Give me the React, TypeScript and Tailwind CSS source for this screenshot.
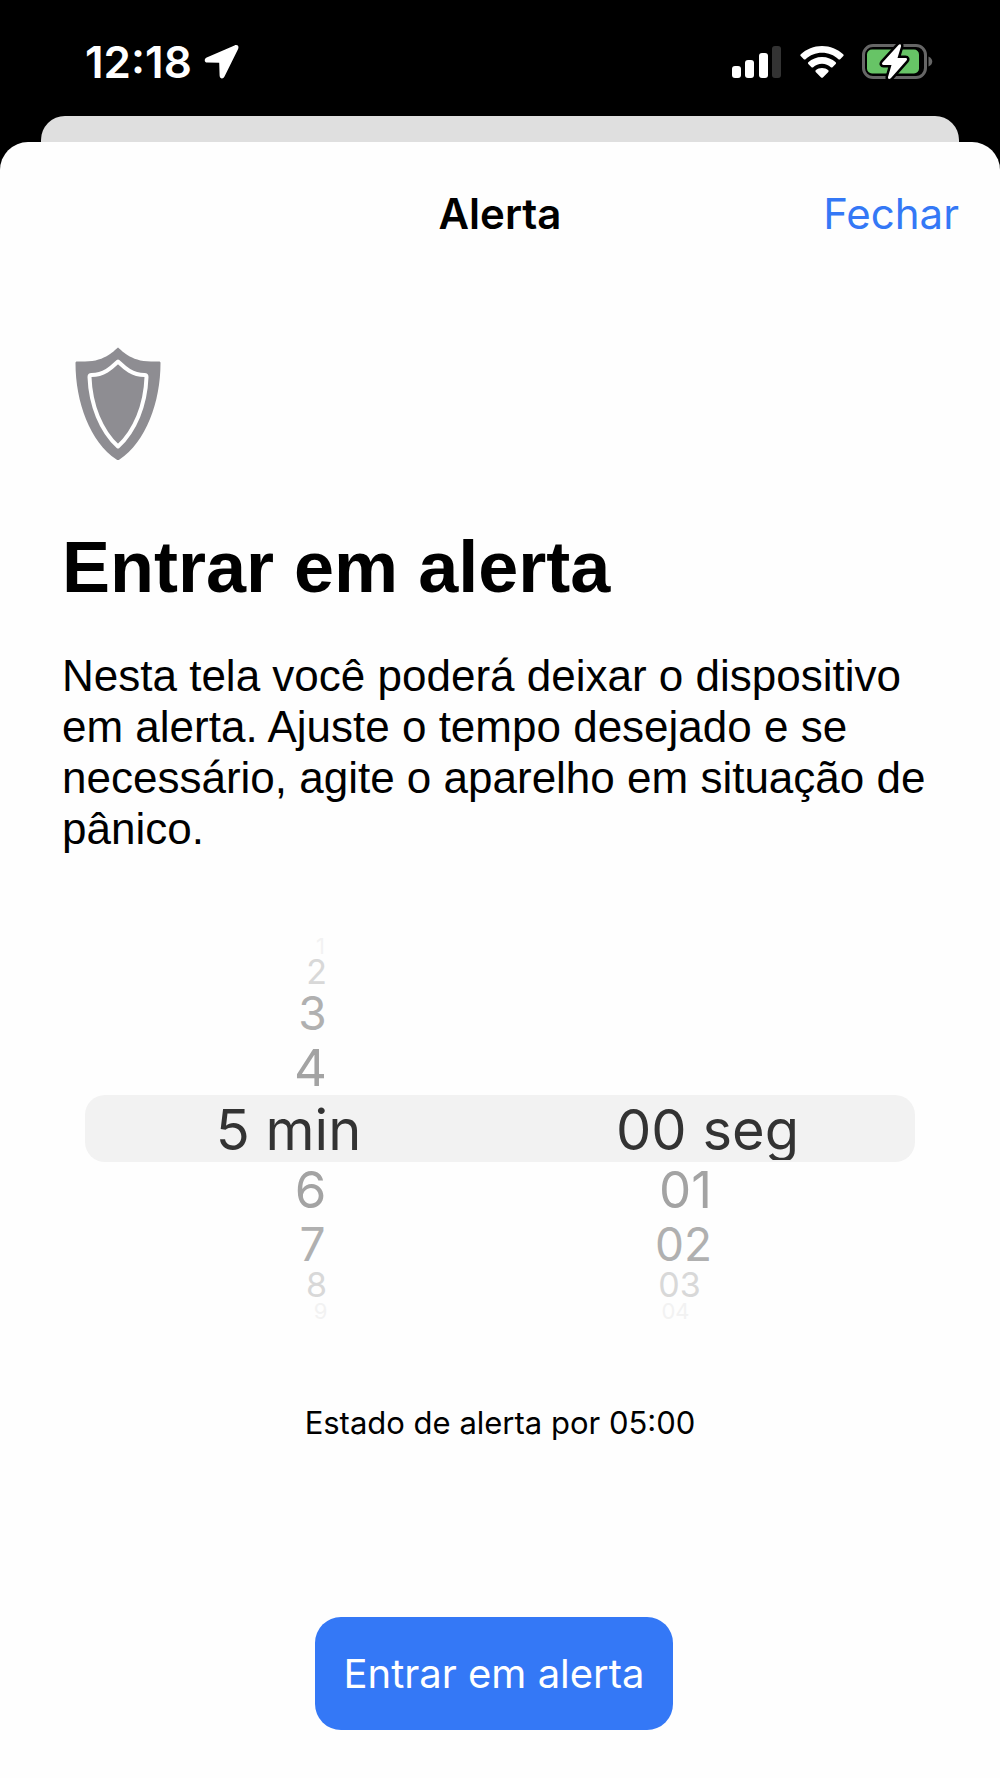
import React, { useState } from 'react';
import clsx from 'clsx';

// Looks of a wheel row, by its distance from the selected one
const ROWS = [
    'h-[67px] text-[56px] text-[#333333]',
    'h-[55px] text-[51px] text-[#a3a3a3]',
    'h-[54px] text-[46px] text-[#b0b0b0]',
    'h-[28px] text-[34px] text-[#d8d8d8]',
    'h-[24px] text-[22px] text-[#f2f2f2]',
];
const LEFT_PAD = ['pr-2', 'pl-9', 'pl-10', 'pl-12', 'pl-14'];
const RIGHT_PAD = ['', 'pr-11', 'pr-12', 'pr-14', 'pr-16'];

const pad2 = (n: number) => String(n).padStart(2, '0');

const StatusBar = () => (
    <div className="flex h-[116px] items-center justify-between pt-2 pr-[67px] pl-[85px] text-white">
        <div className="flex items-center gap-3">
            <span className="text-[44px] leading-none font-semibold">12:18</span>
            <svg width="36" height="36" viewBox="0 0 36 36" fill="currentColor" aria-hidden="true">
                <path d="M30.5 1.4 2.7 13.4C-.2 14.7.2 18.5 3.4 18.6L15.2 18.8 15.6 31.4C15.7 35 19.2 35.5 20.5 32.5L34 5.2C35.4 2 33.4.3 30.5 1.4Z" />
            </svg>
        </div>
        <div className="flex items-center gap-[18px]">
            <svg width="50" height="34" viewBox="0 0 50 34" aria-hidden="true">
                <rect x="0" y="21" width="9" height="12" rx="3" fill="#fff" />
                <rect x="13" y="15" width="9" height="18" rx="3" fill="#fff" />
                <rect x="27" y="8" width="9" height="25" rx="3" fill="#fff" />
                <rect x="40" y="1" width="9" height="32" rx="3" fill="#333" />
            </svg>
            <svg width="44" height="34" viewBox="0 0 44 34" fill="currentColor" aria-hidden="true">
                <path d="M22 1C13.8 1 6.4 4.1.8 9.3.2 9.9.2 10.6.7 11.1L3.8 14.2C4.3 14.7 5 14.7 5.6 14.2 10 10.2 15.7 7.8 22 7.8S34 10.2 38.4 14.2C39 14.7 39.7 14.7 40.2 14.2L43.3 11.1C43.8 10.6 43.8 9.9 43.2 9.3 37.6 4.1 30.2 1 22 1Z" />
                <path d="M22 12C16.7 12 11.9 14 8.3 17.3 7.8 17.8 7.8 18.5 8.3 19L11.5 22.2C12 22.7 12.6 22.7 13.2 22.2 15.5 20.1 18.6 18.8 22 18.8S28.5 20.1 30.8 22.2C31.4 22.7 32 22.7 32.5 22.2L35.7 19C36.2 18.5 36.2 17.8 35.7 17.3 32.1 14 27.3 12 22 12Z" />
                <path d="M22 23C19.6 23 17.4 23.9 15.7 25.3 15.2 25.8 15.2 26.4 15.7 26.9L21.1 32.4C21.7 33 22.3 33 22.9 32.4L28.3 26.9C28.8 26.4 28.8 25.8 28.3 25.3 26.6 23.9 24.4 23 22 23Z" />
            </svg>
            <svg width="71" height="36" viewBox="0 0 71 36" aria-hidden="true">
                <rect x="1.5" y="1.5" width="62" height="32" rx="9.5" fill="none" stroke="#666" strokeWidth="3" />
                <path d="M66.5 12.5C71.5 14.5 71.5 20.5 66.5 22.5Z" fill="#666" />
                <rect x="5" y="5.5" width="52" height="24" rx="5" fill="#67c466" />
                <path
                    d="M36.5 1 20.5 18.5C19.5 19.8 20 21 21.5 21H29.5L26 33C25.7 35.3 27.5 35.3 29 34L44.5 16.5C45.5 15.2 45 14 43.5 14H35.5L39 2.5C39.3.2 37.8-.2 36.5 1Z"
                    fill="#fff"
                    stroke="#000"
                    strokeWidth="5"
                    strokeLinejoin="round"
                    paintOrder="stroke"
                />
            </svg>
        </div>
    </div>
);

const ShieldIcon = () => (
    <svg width="86" height="114" viewBox="0 0 86 114" aria-hidden="true">
        <path
            d="M43 .5C46 2.5 55 14.5 76 14.5H84C85 14.5 85.5 15 85.5 16 85.5 55 71 95 44.5 112.5Q43 113.7 41.5 112.5C15 95 .5 55 .5 16 .5 15 1 14.5 2 14.5H10C31 14.5 40 2.5 43 .5Z"
            fill="#8e8d92"
        />
        <path
            d="M43 14.5C39 18 31 28 16.5 28 14.8 28 14.5 28.5 14.5 30 15.5 58 26 84 43 99.5 60 84 70.5 58 71.5 30 71.5 28.5 71.2 28 69.5 28 55 28 47 18 43 14.5Z"
            fill="none"
            stroke="#fff"
            strokeWidth="4"
            strokeLinejoin="round"
        />
    </svg>
);

type WheelProps = {
    label: string;
    unit: string;
    value: number;
    onChange: (value: number) => void;
    format: (value: number) => string;
    pads: string[];
};

const Wheel = ({ label, unit, value, onChange, format, pads }: WheelProps) => (
    <div role="listbox" aria-label={label} className="flex flex-1 flex-col overflow-hidden">
        {[-4, -3, -2, -1, 0, 1, 2, 3, 4].map((offset) => {
            const n = value + offset;
            const tier = Math.abs(offset);
            const row = clsx('flex w-full items-center justify-center leading-none', ROWS[tier], pads[tier]);
            if (n < 0 || n > 59) return <div key={offset} className={row} />;
            return (
                <button
                    key={offset}
                    type="button"
                    role="option"
                    aria-selected={offset === 0}
                    onClick={() => onChange(n)}
                    className={row}
                >
                    {offset === 0 ? (
                        <span className="h-[62px] overflow-hidden leading-[64px]">{format(n)} {unit}</span>
                    ) : (
                        format(n)
                    )}
                </button>
            );
        })}
    </div>
);

export default function App() {
    const [minutes, setMinutes] = useState(5);
    const [seconds, setSeconds] = useState(0);

    return (
        <div className="flex min-h-screen flex-col bg-black font-['Inter',sans-serif] text-black">
            <StatusBar />
            <div className="mx-[41px] h-[26px] rounded-t-3xl bg-[#dfdfdf]" />
            <main className="flex flex-1 flex-col rounded-t-[28px] bg-[#fefefe]">
                <header className="grid h-36 grid-cols-3 items-center px-[41px]">
                    <h2 className="col-start-2 text-center text-[42px] leading-none font-semibold">Alerta</h2>
                    <button type="button" className="justify-self-end text-[42px] leading-none text-[#3478f6]">
                        Fechar
                    </button>
                </header>

                <section className="px-[62px] pt-[61px] font-['Liberation_Sans',Arial,sans-serif]">
                    <div className="pl-[13px]">
                        <ShieldIcon />
                    </div>
                    <h1 className="mt-[66px] text-[72px] leading-[80px] font-bold">Entrar em alerta</h1>
                    <p className="mt-[43px] text-[44px] leading-[51px]">
                        Nesta tela você poderá deixar o dispositivo em alerta. Ajuste o tempo desejado e se necessário, agite o
                        aparelho em situação de pânico.
                    </p>
                </section>

                <div className="mt-20 grid px-[85px]">
                    <div className="col-start-1 row-start-1 h-[67px] self-center rounded-[20px] bg-[#f2f2f2]" />
                    <div className="col-start-1 row-start-1 flex">
                        <Wheel label="Minutos" unit="min" value={minutes} onChange={setMinutes} format={String} pads={LEFT_PAD} />
                        <Wheel label="Segundos" unit="seg" value={seconds} onChange={setSeconds} format={pad2} pads={RIGHT_PAD} />
                    </div>
                </div>

                <p className="mt-20 text-center text-[31px] leading-10">
                    Estado de alerta por {pad2(minutes)}:{pad2(seconds)}
                </p>

                <div className="mt-auto flex justify-center pr-3 pb-12">
                    <button type="button" className="h-[113px] rounded-[26px] bg-[#3478f6] px-7 text-[40px] leading-none text-white">
                        Entrar em alerta
                    </button>
                </div>
            </main>
        </div>
    );
}
